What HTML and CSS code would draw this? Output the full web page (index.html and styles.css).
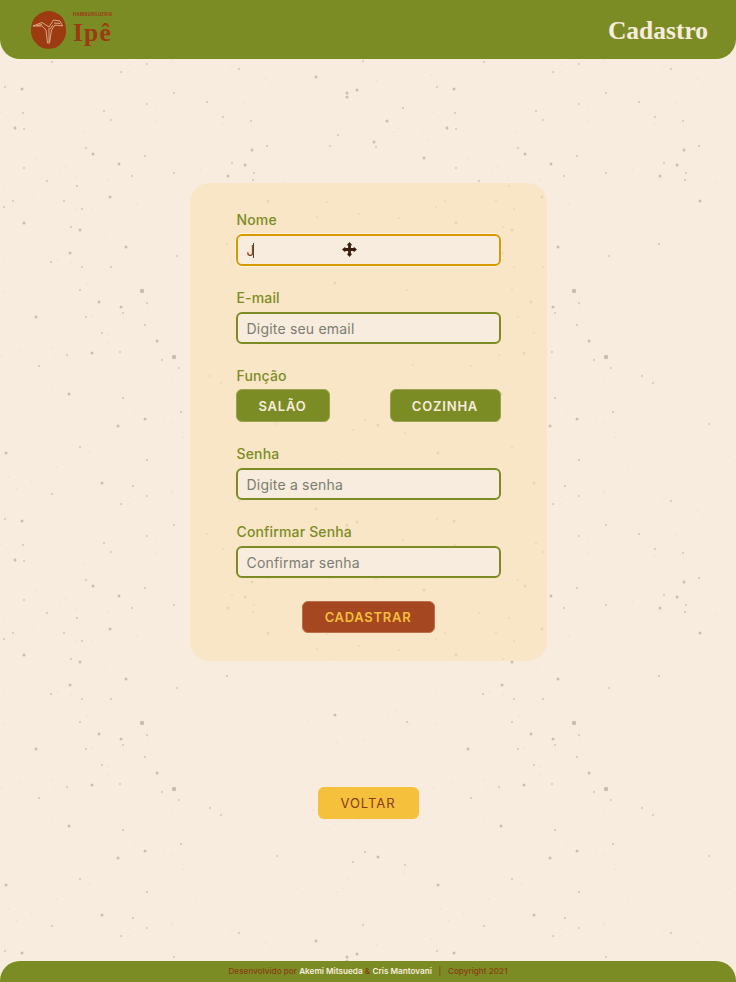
FILE: index.html
```html
<!DOCTYPE html>
<html lang="pt-BR">
<head>
    <meta charset="UTF-8">
    <meta name="viewport" content="width=device-width, initial-scale=1.0">
    <title>Cadastro</title>
    <link rel="stylesheet" href="styles.css">
</head>
<body>
    <!-- paper texture, tile of 432px -->
    <svg class="speckle" aria-hidden="true">
        <defs>
            <pattern id="paper" width="432" height="432" patternUnits="userSpaceOnUse">
                <path class="dot-s" d="M130 64h0M172 60h0M108 72h0M128 72h0M0 77h0M123 88h0M16 104h0M157 107h0M1 112h0M157 121h0M85 132h0M117 144h0M37 159h0M66 167h0M60 173h0M77 177h0M108 180h0M5 187h0M34 195h0M137 204h0M75 209h0M92 210h0M106 234h0M3 258h0M58 260h0M71 262h0M120 276h0M87 284h0M5 292h0M66 296h0M48 305h0M148 309h0M92 316h0M168 316h0M108 334h0M107 343h0M19 350h0M51 348h0M2 356h0M32 359h0M54 357h0M173 379h0M51 387h0M134 413h0M163 421h0M173 422h0M2 424h0M182 0h0M183 6h0M120 13h0M90 20h0M57 35h0M9 45h0M31 50h0M17 57h0M172 59h0M230 67h0M266 78h0M270 83h0M251 88h0M377 81h0M431 75h0M243 103h0M222 124h0M232 131h0M399 128h0M394 132h0M422 130h0M427 140h0M344 158h0M360 155h0M201 170h0M285 182h0M327 209h0M365 200h0M376 218h0M330 226h0M396 279h0M387 283h0M410 292h0M200 292h0M308 290h0M337 310h0M363 308h0M313 378h0M335 392h0M358 389h0M350 385h0M400 386h0M347 15h0M403 9h0M297 24h0M343 24h0M337 28h0M197 37h0"/>
                <path class="dot-m" d="M52 62h0M147 64h0M121 72h0M5 87h0M174 93h0M147 104h0M104 111h0M23 113h0M111 120h0M24 129h0M86 148h0M145 156h0M24 168h0M132 176h0M174 173h0M47 181h0M77 186h0M13 201h0M64 201h0M4 207h0M82 209h0M71 227h0M177 256h0M51 262h0M82 267h0M111 267h0M80 290h0M147 303h0M123 313h0M86 317h0M145 325h0M102 333h0M67 355h0M120 352h0M162 360h0M39 366h0M179 368h0M123 398h0M181 412h0M80 15h0M147 28h0M133 54h0M239 69h0M363 61h0M207 102h0M403 108h0M223 117h0M251 121h0M338 135h0M376 147h0M330 146h0M267 146h0M232 163h0M254 173h0M253 180h0M327 202h0M359 214h0M317 217h0M399 218h0M227 244h0M407 290h0M210 376h0M221 383h0M413 365h0M277 424h0M365 420h0M405 1h0M353 430h0"/>
                <path class="dot-l" d="M22 89h0M15 128h0M93 154h0M119 164h0M110 197h0M24 223h0M80 230h0M126 247h0M70 253h0M99 302h0M121 307h0M36 317h0M157 341h0M92 353h0M69 394h0M145 419h0M118 426h0M6 21h0M102 51h0M316 77h0M347 93h0M347 97h0M357 90h0M387 121h0M374 142h0M252 150h0M424 158h0M245 165h0M228 176h0M268 201h0M335 283h0M378 425h0"/>
                <path class="dot-xl" d="M142 291h0M174 357h0"/>
            </pattern>
        </defs>
        <rect width="100%" height="100%" fill="url(#paper)"/>
    </svg>

    <header class="top-bar">
        <a href="#" class="logo">
            <svg class="logo-mark" viewBox="0 0 40 40" aria-hidden="true">
                <path class="logo-blob" d="M19 1C24 0.500 29 3 33 7C36 11 37.500 17 37 23C36 30 32 35 26 38C21 39.500 14 39 10 36C5 32 2 27 2 21C2 15 3.500 9 8 5.500C11 3 15 1.500 19 1Z"/>
                <path class="logo-tree" d="M4 16L13 12.500L20 17L24.500 10L31 11L33.500 16L26 15L22.500 20L20.500 33H18.500L17 20L13 16ZM8 15.500L13 14.500M25 13L31 13.500M20 18V32M24 15L21 19"/>
            </svg>
            <span class="logo-text">
                <small>HAMBURGUERIA</small>
                <strong>Ipê</strong>
            </span>
        </a>
        <h1>Cadastro</h1>
    </header>

    <main>
        <form class="card" onsubmit="event.preventDefault();">
            <div class="field">
                <label for="nome">Nome</label>
                <div class="input-wrap">
                    <input type="text" id="nome" class="is-focused" value="J">
                    <span class="caret"></span>
                    <svg class="move-cursor" viewBox="0 0 16 16" aria-hidden="true">
                        <path d="M8 0L11 3.500H9.500V6.500H12.500V5L16 8L12.500 11V9.500H9.500V12.500H11L8 16L5 12.500H6.500V9.500H3.500V11L0 8L3.500 5V6.500H6.500V3.500H5Z"/>
                    </svg>
                </div>
            </div>
            <div class="field">
                <label for="email">E-mail</label>
                <input type="email" id="email" placeholder="Digite seu email">
            </div>
            <div class="field">
                <label class="label-tight">Função</label>
                <div class="role-row">
                    <button type="button" class="btn btn-role btn-salao">SALÃO</button>
                    <button type="button" class="btn btn-role btn-cozinha">COZINHA</button>
                </div>
            </div>
            <div class="field">
                <label for="senha">Senha</label>
                <input type="password" id="senha" placeholder="Digite a senha">
            </div>
            <div class="field">
                <label for="confirmar">Confirmar Senha</label>
                <input type="password" id="confirmar" placeholder="Confirmar senha">
            </div>
            <button type="submit" class="btn btn-submit">CADASTRAR</button>
        </form>
        <button type="button" class="btn btn-back">VOLTAR</button>
    </main>

    <footer class="bottom-bar">
        <p>Desenvolvido por <b>Akemi Mitsueda</b> &amp; <b>Cris Mantovani</b> &nbsp; | &nbsp; Copyright 2021</p>
    </footer>
</body>
</html>
```

FILE: styles.css
```css
* {
    box-sizing: border-box;
}
html, body {
    margin: 0;
    height: 100%;
}
body {
    position: relative;
    display: flex;
    flex-direction: column;
    min-height: 982px;
    font-family: Inter, "Open Sans", sans-serif;
    background-color: #f7ecdd;
    overflow: hidden;
}
.speckle {
    position: absolute;
    top: 0;
    left: 0;
    width: 100%;
    height: 100%;
    z-index: -1;
    filter: blur(0.4px);
}
.speckle path {
    fill: none;
    stroke: #b9ad9b;
    stroke-linecap: round;
}
.dot-s {
    stroke-width: 1.1;
    stroke-opacity: 0.4;
}
.dot-m {
    stroke-width: 2;
    stroke-opacity: 0.6;
}
.dot-l {
    stroke-width: 3;
    stroke-opacity: 0.7;
}
.dot-xl {
    stroke-width: 4.500;
    stroke-opacity: 0.75;
}

.top-bar {
    display: flex;
    justify-content: space-between;
    align-items: center;
    height: 59px;
    padding: 0 28px 0 29px;
    background: #7c8c25;
    border-radius: 0 0 20px 20px;
}
.top-bar h1 {
    margin: 2px 0 0;
    font-family: "Liberation Serif", serif;
    font-size: 25.500px;
    font-weight: 700;
    color: #f7ecdd;
}
.logo {
    display: flex;
    align-items: center;
    gap: 4px;
    text-decoration: none;
}
.logo-mark {
    width: 40px;
    height: 40px;
}
.logo-blob {
    fill: #9c3a12;
}
.logo-tree {
    fill: none;
    stroke: #e9c7a0;
    stroke-width: 0.8;
}
.logo-text {
    display: flex;
    flex-direction: column;
    align-items: flex-start;
    color: #9c3a12;
}
.logo-text small {
    font-size: 4.300px;
    font-weight: 700;
    letter-spacing: 0.35px;
    line-height: 6px;
}
.logo-text strong {
    font-family: "Liberation Serif", serif;
    font-size: 25.500px;
    line-height: 29px;
    letter-spacing: 1.2px;
}

main {
    flex: 1;
    display: flex;
    flex-direction: column;
    align-items: center;
}
.card {
    width: 357px;
    margin-top: 124px;
    padding: 29px 46px 28px;
    background: rgba(248, 226, 184, 0.6);
    border-radius: 20px;
    text-align: center;
}
.field {
    margin-bottom: 24px;
    text-align: left;
}
.field label {
    display: block;
    margin-bottom: 6px;
    padding-left: 1px;
    font-size: 14px;
    line-height: 16px;
    font-weight: 450;
    letter-spacing: 0.15px;
    color: #7c8c25;
}
.field .label-tight {
    margin-bottom: 5px;
}
.input-wrap {
    position: relative;
}
input {
    display: block;
    width: 100%;
    height: 32px;
    padding: 0 9px;
    font-family: inherit;
    font-size: 14px;
    letter-spacing: 0.2px;
    color: #8a3c14;
    background: #f7ecdd;
    border: 2px solid #7c8c25;
    border-radius: 6px;
    outline: none;
}
input::placeholder {
    color: #7b7d72;
}
input.is-focused {
    border-color: #d99a00;
    box-shadow: 0 0 0 1px rgba(255, 255, 255, 0.5);
}
.caret {
    position: absolute;
    left: 17px;
    top: 9px;
    width: 1px;
    height: 15px;
    background: #3f4a3a;
}
.move-cursor {
    position: absolute;
    left: 106px;
    top: 8px;
    width: 15px;
    height: 15px;
    fill: #3b1d0d;
}
.role-row {
    display: flex;
    justify-content: space-between;
}
.btn {
    height: 32px;
    padding: 0;
    font-family: inherit;
    font-size: 13px;
    font-weight: 600;
    letter-spacing: 0.8px;
    border: 1px solid transparent;
    border-radius: 6px;
    cursor: pointer;
}
.btn-role {
    height: 33px;
    background: #7c8c25;
    border-color: #98a350;
    color: #f7ecdd;
}
.btn-salao {
    width: 94px;
}
.btn-cozinha {
    width: 111px;
}
.btn-submit {
    width: 133px;
    margin-top: -1px;
    letter-spacing: 0.7px;
    background: #a54720;
    border-color: #bb6f4c;
    color: #f5bf3a;
}
.btn-back {
    width: 101px;
    margin-top: 126px;
    background: #f5c03b;
    color: #8a3c14;
    font-weight: 400;
    letter-spacing: 1px;
}

.bottom-bar {
    height: 21px;
    background: #7c8c25;
    border-radius: 20px 20px 0 0;
    text-align: center;
}
.bottom-bar p {
    margin: 0;
    font-size: 8.200px;
    line-height: 21px;
    font-weight: 500;
    color: #8a3c14;
}
.bottom-bar b {
    font-weight: 600;
    color: #f7ecdd;
}
```
